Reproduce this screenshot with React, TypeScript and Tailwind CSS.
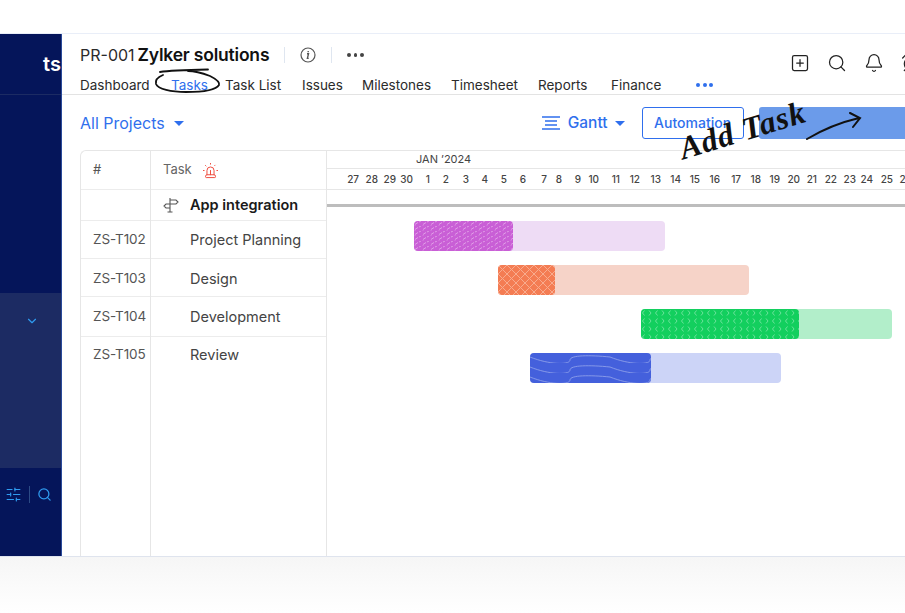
import { AlarmClock, Bell, ChevronDown, Search, Siren, SlidersHorizontal, SquarePlus } from "lucide-react"

const tabs = [
    { label: "Dashboard", className: "w-[89px] text-[#2b2b2b]" },
    { label: "Tasks", className: "w-[56px] text-[#2f6fed]" },
    { label: "Task List", className: "w-[77px] text-[#2b2b2b]" },
    { label: "Issues", className: "w-[60px] text-[#2b2b2b]" },
    { label: "Milestones", className: "w-[89px] text-[#2b2b2b]" },
    { label: "Timesheet", className: "w-[87px] text-[#2b2b2b]" },
    { label: "Reports", className: "w-[73px] text-[#2b2b2b]" },
    { label: "Finance", className: "w-[85px] text-[#2b2b2b]" },
]

const days: [string, number][] = [
    ["27", 32], ["28", 19], ["29", 18], ["30", 17], ["1", 17], ["2", 19], ["3", 20], ["4", 19], ["5", 19], ["6", 19],
    ["7", 21], ["8", 15], ["9", 19], ["10", 18], ["11", 21], ["12", 20], ["13", 21], ["14", 20], ["15", 19], ["16", 20],
    ["17", 21], ["18", 20], ["19", 19], ["20", 20], ["21", 17], ["22", 20], ["23", 19], ["24", 17], ["25", 20], ["26", 19],
]

const tasks = [
    { id: "ZS-T102", name: "Project Planning", className: "h-[38px] pt-[8px]" },
    { id: "ZS-T103", name: "Design", className: "h-[38px] pt-[9px]" },
    { id: "ZS-T104", name: "Development", className: "h-[40px] pt-[9px]" },
    { id: "ZS-T105", name: "Review", className: "flex-1 pt-[7px]" },
]

const Pattern = ({ id, children, size }: { id: string; children: React.ReactNode; size: [number, number] }) => (
    <svg className="block h-full w-full" aria-hidden="true">
        <defs>
            <pattern id={id} width={size[0]} height={size[1]} patternUnits="userSpaceOnUse">
                {children}
            </pattern>
        </defs>
        <rect width="100%" height="100%" fill={`url(#${id})`} />
    </svg>
)

const GanttBar = ({ rowClass, lightClass, darkClass, children }: { rowClass: string; lightClass: string; darkClass: string; children: React.ReactNode }) => (
    <div className={`h-[30px] rounded-[4px] ${rowClass} ${lightClass}`}>
        <div className={`h-full overflow-hidden rounded-[4px] ${darkClass}`}>{children}</div>
    </div>
)

export default function App() {
    return (
        <div className="flex h-[613px] w-[905px] flex-col overflow-hidden bg-white font-['Inter',sans-serif]">
            <div className="h-[34px] shrink-0 border-b border-[#e9eef8]" />
            <div className="flex h-[523px] shrink-0 border-b border-[#dfe4ee]">
                <aside className="flex w-[62px] shrink-0 flex-col border-r border-[#2a4a9a] bg-[#05155a]">
                    <div className="flex h-[61px] shrink-0 items-center justify-end border-b border-[#1c2b63] pr-[47px]">
                        <span className="-mr-[47px] w-[47px] text-[20px] leading-none font-semibold text-white [direction:rtl]">ts</span>
                    </div>
                    <div className="h-[198px] shrink-0" />
                    <div className="h-[175px] shrink-0 bg-[#1c2b63] pt-[21px] pl-[25px]">
                        <ChevronDown size={14} strokeWidth={2} className="text-[#2f9bf0]" />
                    </div>
                    <div className="flex items-center pt-[18px] pl-[5px]">
                        <SlidersHorizontal size={17} strokeWidth={1.6} className="text-[#2f9bf0]" />
                        <div className="mx-[7px] h-[17px] w-px bg-[#2c4b86]" />
                        <Search size={15} strokeWidth={2} className="text-[#2f9bf0]" />
                    </div>
                </aside>

                <main className="flex min-w-0 flex-1 flex-col">
                    <header className="relative h-[61px] shrink-0 border-b border-[#e3e3e3] pl-[18px]">
                        <div className="flex h-[41px] items-center pt-[1px]">
                            <span className="text-[16px] text-[#2b2b2b]">PR-001</span>
                            <span className="ml-[3px] text-[17.5px] font-semibold tracking-[-0.2px] text-[#111]">Zylker solutions</span>
                            <div className="mx-[15px] h-[16px] w-px bg-[#dfe6f0]" />
                            <svg width="16" height="16" viewBox="0 0 16 16" className="text-[#555]" aria-hidden="true">
                                <circle cx="8" cy="8" r="7" fill="none" stroke="currentColor" strokeWidth="1.2" />
                                <path d="M7 6.8h1.5L7.4 11.4h1.3M8.2 4.1v1.2" fill="none" stroke="currentColor" strokeWidth="1.4" />
                            </svg>
                            <div className="mx-[15px] h-[16px] w-px bg-[#dfe6f0]" />
                            <div className="flex gap-[3px]">
                                <span className="size-[3.5px] rounded-full bg-[#444]" />
                                <span className="size-[3.5px] rounded-full bg-[#444]" />
                                <span className="size-[3.5px] rounded-full bg-[#444]" />
                            </div>
                        </div>
                        <nav className="flex items-center text-[13.5px] leading-[20px]">
                            {tabs.map((t) => (
                                <span key={t.label} className={`shrink-0 ${t.className} ${t.label === "Tasks" ? "pl-[2px]" : ""}`}>
                                    {t.label}
                                </span>
                            ))}
                            <div className="flex gap-[2.5px]">
                                <span className="size-[4px] rounded-full bg-[#2f6fed]" />
                                <span className="size-[4px] rounded-full bg-[#2f6fed]" />
                                <span className="size-[4px] rounded-full bg-[#2f6fed]" />
                            </div>
                        </nav>
                        <div className="absolute top-[19px] left-[728px] flex gap-[17px] text-[#222]">
                            <SquarePlus size={20} strokeWidth={1.5} />
                            <Search size={20} strokeWidth={1.5} />
                            <Bell size={20} strokeWidth={1.5} />
                            <AlarmClock size={20} strokeWidth={1.5} />
                        </div>
                        {/* hand drawn ring around the Tasks tab */}
                        <svg className="absolute top-[34px] left-[91px]" width="70" height="28" viewBox="0 0 70 28" fill="none" aria-hidden="true">
                            <path d="M7 4c9-1.5 22-2 48-2.500M10 7C5 9 2 12 3 16c2 5 15 8 30 8 15 0 30-2 33-7 1-3-3-6-9-9-8-3-16-5-22-5" stroke="#111" strokeWidth="1.8" strokeLinecap="round" />
                        </svg>
                    </header>

                    <div className="relative flex h-[55px] shrink-0 items-center pt-[-1px] pl-[18px]">
                        <span className="text-[16px] text-[#2f6fed]">All Projects</span>
                        <span className="mt-[2px] ml-[9px] h-0 w-0 border-x-[5px] border-t-[5px] border-x-transparent border-t-[#2f6fed]" />
                        <svg className="ml-[358px]" width="18" height="14" viewBox="0 0 18 14" stroke="#2f6fed" strokeWidth="1.4" aria-hidden="true">
                            <path d="M0 1h18M3 5h12M3 9h12M0 13h18" />
                        </svg>
                        <span className="ml-[8px] text-[15.5px] font-medium text-[#2f6fed]">Gantt</span>
                        <span className="mt-[2px] ml-[7px] h-0 w-0 border-x-[5px] border-t-[5px] border-x-transparent border-t-[#2f6fed]" />
                        <div className="ml-[17px] flex h-[32px] w-[102px] shrink-0 items-center justify-center rounded-[3px] border border-[#2f6fed] text-[14px] font-medium text-[#2f6fed]">
                            Automation
                        </div>
                        <div className="ml-[15px] h-[32px] flex-1 rounded-l-[3px] bg-[#6b9bea]" />
                    </div>

                    <div className="ml-[18px] flex min-h-0 flex-1 rounded-tl-[6px] border-t border-l border-[#e6e6e6]">
                        <div className="flex w-[70px] shrink-0 flex-col border-r border-[#e6e6e6] text-[#555]">
                            <div className="flex h-[39px] items-center border-b border-[#ececec] pl-[12px] text-[13px]">#</div>
                            <div className="h-[31px] border-b border-[#ececec]" />
                            {tasks.map((t) => (
                                <div key={t.id} className={`border-b border-[#ececec] pl-[12px] text-[13.5px] tracking-[-0.1px] last:border-b-0 ${t.className}`}>
                                    {t.id}
                                </div>
                            ))}
                        </div>
                        <div className="flex w-[176px] shrink-0 flex-col border-r border-[#e6e6e6]">
                            <div className="flex h-[39px] items-center gap-[10px] border-b border-[#ececec] pl-[12px] text-[13px] text-[#666]">
                                Task
                                <Siren size={17} strokeWidth={1.4} className="text-[#ef4c3f]" />
                            </div>
                            <div className="flex h-[31px] items-center border-b border-[#ececec] pl-[12px]">
                                <svg width="16" height="16" viewBox="0 0 16 16" fill="none" stroke="#555" strokeWidth="1.1" aria-hidden="true">
                                    <path d="M7 1v14M4.500 15h5M7 3h6l2 2-2 2H7M7 7H3L1 9l2 2h4" />
                                </svg>
                                <span className="ml-[11px] text-[14.5px] font-semibold text-[#1a1a1a]">App integration</span>
                            </div>
                            {tasks.map((t) => (
                                <div key={t.id} className={`border-b border-[#ececec] pl-[39px] text-[14.5px] text-[#444] last:border-b-0 ${t.className}`}>
                                    {t.name}
                                </div>
                            ))}
                        </div>

                        <div className="min-w-0 flex-1 overflow-hidden">
                            <div className="h-[18px] border-b border-[#e6e6e6] pl-[89px] text-[11px] leading-[17px] text-[#444]">JAN ’2024</div>
                            <div className="flex h-[21px] items-center border-b border-[#e6e6e6] text-[10px] font-medium text-[#444]">
                                {days.map(([d, w]) => (
                                    <span key={d} className="shrink-0 text-right" style={{ width: w }}>
                                        {d}
                                    </span>
                                ))}
                            </div>
                            <div className="mt-[14px] h-[3px] bg-[#bdbdbd]" />
                            <div className="mt-[14px] flex flex-col gap-[14px]">
                                <GanttBar rowClass="ml-[87px] w-[251px]" lightClass="bg-[#eedcf5]" darkClass="w-[99px] bg-[#c95fd6]">
                                    <Pattern id="dots" size={[8, 5]}>
                                        <path d="M1 3.500l3-2M5 1l2-1M0 5.500l1-1" stroke="#e09ee6" strokeWidth="1" />
                                    </Pattern>
                                </GanttBar>
                                <GanttBar rowClass="ml-[171px] w-[251px]" lightClass="bg-[#f6d3c8]" darkClass="w-[57px] bg-[#f47c53]">
                                    <Pattern id="cross" size={[9, 9]}>
                                        <path d="M0 0l9 9M9 0L0 9" stroke="#f8ab8e" strokeWidth="1" />
                                    </Pattern>
                                </GanttBar>
                                <GanttBar rowClass="ml-[314px] w-[251px]" lightClass="bg-[#b2eeca]" darkClass="w-[158px] bg-[#13cf5e]">
                                    <Pattern id="chev" size={[13, 8]}>
                                        <path d="M3.500 1.500L1.500 4l2 2.500M8 1.500L10 4l-2 2.500" fill="none" stroke="#73e3a0" strokeWidth="0.9" />
                                    </Pattern>
                                </GanttBar>
                                <GanttBar rowClass="ml-[203px] w-[251px]" lightClass="bg-[#ccd4f7]" darkClass="w-[121px] bg-[#4460dc]">
                                    <Pattern id="wave" size={[80, 10]}>
                                        <path d="M0 4c20 8 40 8 40 3s20-5 40-3" fill="none" stroke="#8497e8" strokeWidth="1" />
                                    </Pattern>
                                </GanttBar>
                            </div>
                        </div>
                    </div>
                </main>
            </div>
            <div className="flex-1 bg-gradient-to-b from-[#f6f6f6] to-white" />

            {/* hand written note over the toolbar */}
            <span className="absolute top-[133px] left-[680px] origin-left -rotate-[17deg] font-['Liberation_Serif',serif] text-[32px] leading-none font-bold tracking-[1px] text-[#111] italic">
                Add Task
            </span>
            <svg className="absolute top-[112px] left-[804px]" width="60" height="30" viewBox="0 0 60 30" fill="none" stroke="#111" strokeWidth="2" strokeLinecap="round" aria-hidden="true">
                <path d="M3 27C18 18 38 10 55 6M46 1l10 5-7 9" />
            </svg>
        </div>
    )
}
